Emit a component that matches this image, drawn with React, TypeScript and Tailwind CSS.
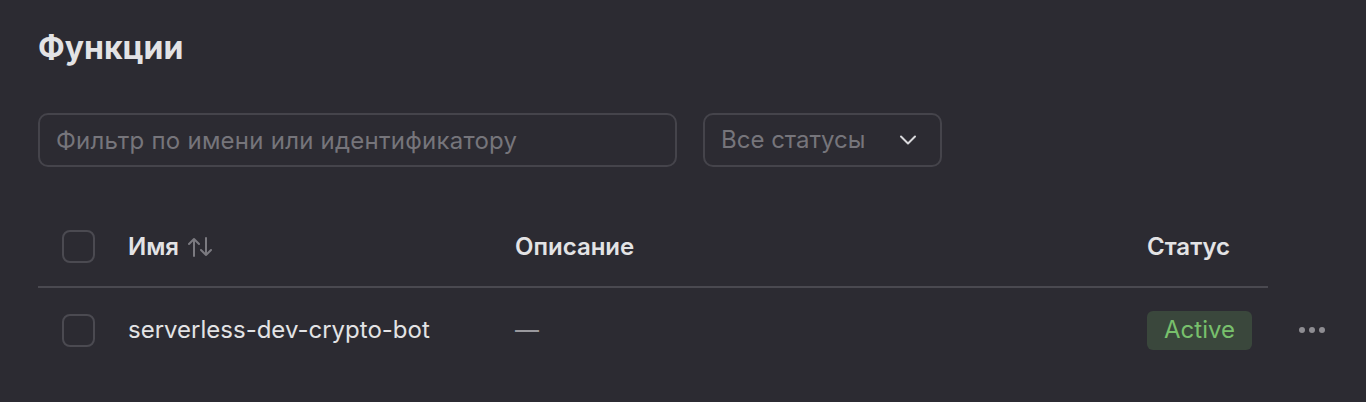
import { ChevronDown } from "lucide-react";

function Checkbox() {
  return <div className="h-[33px] w-[33px] rounded-[8px] border-2 border-[#4b4a51]" />;
}

function SortIcon() {
  return (
    <svg width="26" height="22" viewBox="0 0 26 22" fill="none" stroke="#7b7a80" strokeWidth="2" strokeLinecap="round" strokeLinejoin="round">
      <path d="M7 20V3M2 8l5-5 5 5" />
      <path d="M19 2v17M14 14l5 5 5-5" />
    </svg>
  );
}

export default function App() {
  return (
    <div className="min-h-[402px] bg-[#2c2b32] px-[38px] pt-[28px] font-['Inter',sans-serif] text-[#e3e3e5]">
      <h1 className="text-[32px] font-bold leading-[40px]">Функции</h1>

      <div className="mt-[45px] flex gap-[26px]">
        <input
          placeholder="Фильтр по имени или идентификатору"
          className="h-[54px] w-[639px] rounded-[10px] border-2 border-[#45444b] bg-transparent px-[16px] text-[24px] tracking-[0.01em] text-[#e3e3e5] outline-none placeholder:text-[#76757b]"
        />
        <button className="flex h-[54px] w-[239px] items-center justify-between rounded-[10px] border-2 border-[#45444b] pl-[16px] pr-[18px] text-[24px] text-[#76757b]">
          <span>Все статусы</span>
          <ChevronDown size={28} strokeWidth={1.7} className="text-[#d9d9dc]" />
        </button>
      </div>

      <div className="mt-[40px] w-[1230px]">
        <div className="grid h-[81px] grid-cols-[90px_387px_632px_121px] items-center border-b-2 border-[#4a4950] text-[24px] font-semibold">
          <div className="pl-[24px]">
            <Checkbox />
          </div>
          <div className="flex items-center gap-[8px]">
            <span>Имя</span>
            <SortIcon />
          </div>
          <div>Описание</div>
          <div>Статус</div>
        </div>

        <div className="relative grid h-[84px] grid-cols-[90px_387px_632px_121px] items-center text-[24px]">
          <div className="pl-[24px]">
            <Checkbox />
          </div>
          <div>serverless-dev-crypto-bot</div>
          <div className="text-[#9a999e]">—</div>
          <div>
            <span className="inline-flex h-[39px] w-[105px] items-center justify-center rounded-[6px] bg-[#3a473c] text-[#78c06c]">
              Active
            </span>
          </div>
          <div className="absolute left-[1261px] top-1/2 flex -translate-y-1/2 gap-[4px]">
            <span className="h-[6px] w-[6px] rounded-full bg-[#8e8d92]" />
            <span className="h-[6px] w-[6px] rounded-full bg-[#8e8d92]" />
            <span className="h-[6px] w-[6px] rounded-full bg-[#8e8d92]" />
          </div>
        </div>
      </div>
    </div>
  );
}
